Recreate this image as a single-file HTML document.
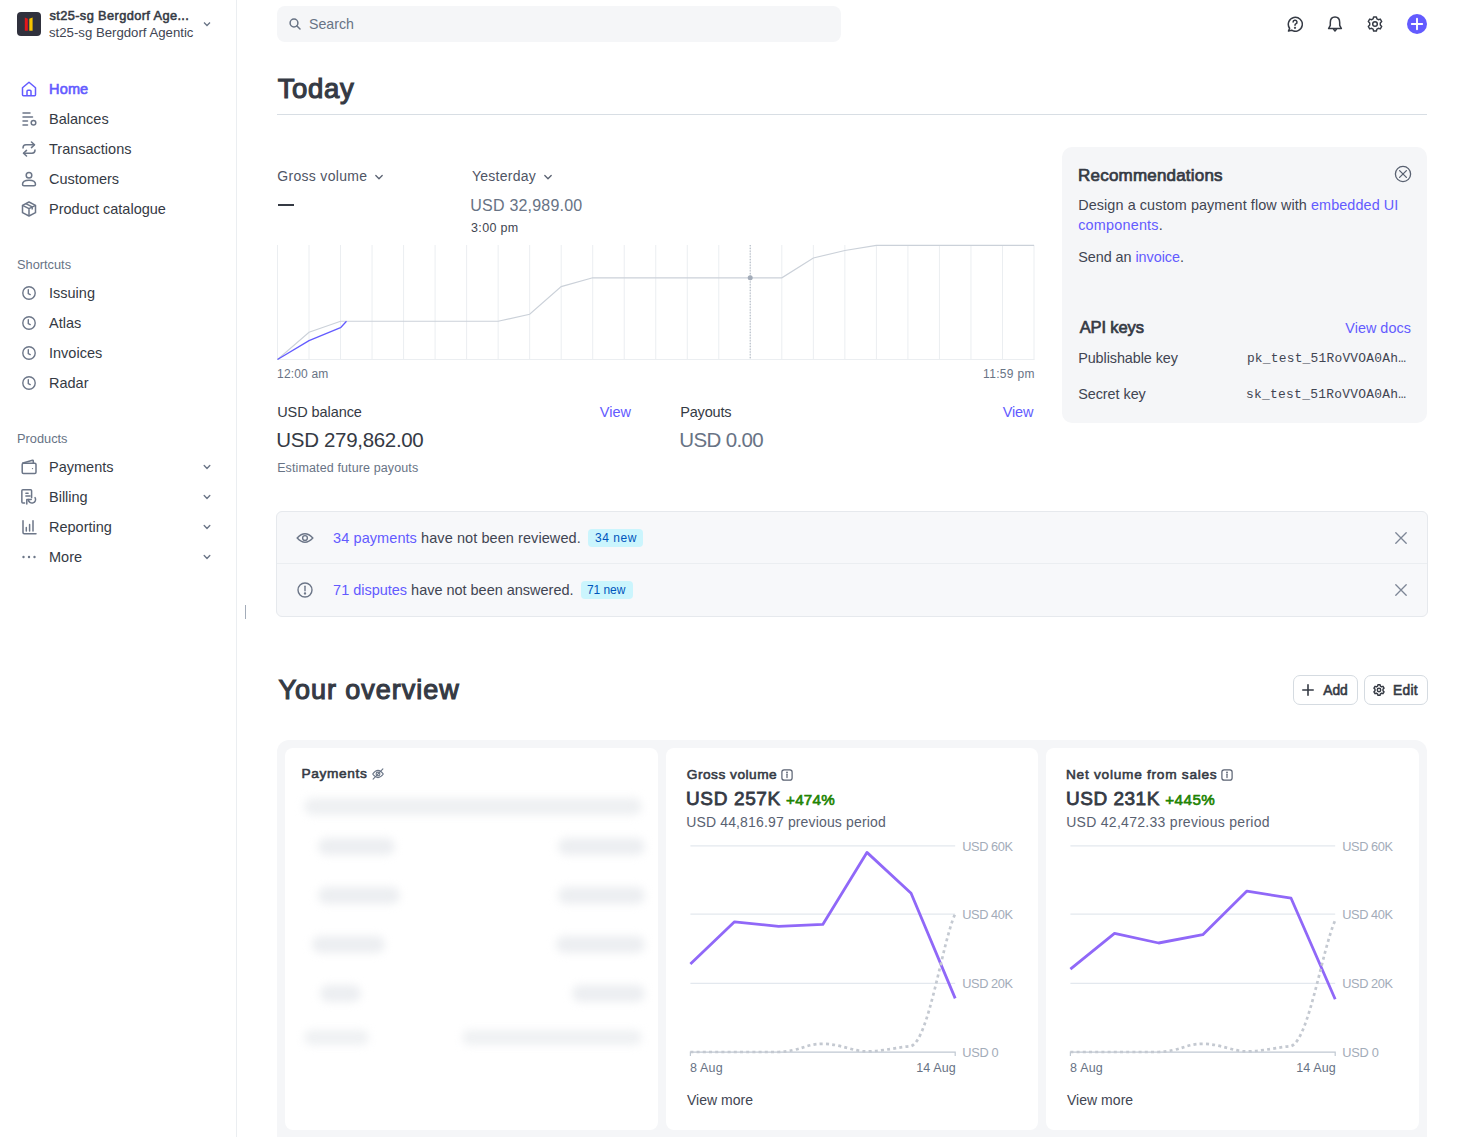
<!DOCTYPE html>
<html><head><meta charset="utf-8">
<style>
*{box-sizing:border-box;margin:0;padding:0}
html,body{width:1462px;height:1137px;overflow:hidden;background:#fff;font-family:"Liberation Sans",sans-serif;color:#353a44}
.abs{position:absolute}
.t{position:absolute;white-space:nowrap;line-height:1}
#side{position:absolute;left:0;top:0;width:237px;height:1137px;border-right:1px solid #ebeef1}
.nav{font-size:14.5px;color:#353a44}
.ico{position:absolute}
.sec{font-size:12.8px;color:#687385}
.purple{color:#635bff}
</style></head><body>
<div id="side">
  <!-- logo -->
  <div class="abs" style="left:17px;top:12px;width:24px;height:24px;border-radius:4px;background:#30313d">
    <svg class="abs" style="left:0;top:0" width="24" height="24" viewBox="0 0 24 24"><path d="M7.8 5.6 L10.8 6.8 V18.8 H7.8 Z" fill="#e5171b"/><path d="M12.3 6.8 L15.6 5.6 V18.8 H12.3 Z" fill="#f6c400"/></svg>
  </div>
  <div class="t" style="left:49px;top:26px;font-size:13.2px;color:#414552">st25-sg Bergdorf Agentic</div>
  <svg class="ico" style="left:202px;top:19px" width="10" height="10" viewBox="0 0 10 10"><path d="M2 3.5 L5 6.5 L8 3.5" fill="none" stroke="#687385" stroke-width="1.3"/></svg>


  <svg class="ico" style="left:21px;top:81px" width="16" height="16" viewBox="0 0 16 16" fill="none" stroke="#635bff" stroke-width="1.5" stroke-linejoin="round"><path d="M1.5 6.8 L8 1.2 L14.5 6.8 V13.8 Q14.5 14.8 13.5 14.8 H2.5 Q1.5 14.8 1.5 13.8 Z"/><path d="M6 14.8 V10.2 Q6 9.2 7 9.2 H9 Q10 9.2 10 10.2 V14.8"/></svg>
  <svg class="ico" style="left:21px;top:111px" width="16" height="16" viewBox="0 0 16 16" fill="none" stroke="#6c7688" stroke-width="1.5" stroke-linecap="round"><path d="M2 2 H9 M2 6 H11.5 M2 10 H6.5 M2 14 H6.5"/><circle cx="12.5" cy="11.8" r="2.3"/></svg>
  <svg class="ico" style="left:21px;top:141px" width="16" height="16" viewBox="0 0 16 16" fill="none" stroke="#6c7688" stroke-width="1.5" stroke-linecap="round" stroke-linejoin="round"><path d="M10.5 1 L13.5 3.8 L10.5 6.6"/><path d="M13.3 3.8 H5 Q2 3.8 2 7"/><path d="M5.5 15 L2.5 12.2 L5.5 9.4"/><path d="M2.7 12.2 H11 Q14 12.2 14 9"/></svg>
  <svg class="ico" style="left:21px;top:171px" width="16" height="16" viewBox="0 0 16 16" fill="none" stroke="#6c7688" stroke-width="1.5"><circle cx="8" cy="4.3" r="2.8"/><path d="M1.5 13.3 Q1.5 9.2 8 9.2 Q14.5 9.2 14.5 13.3 Q14.5 14.8 13 14.8 H3 Q1.5 14.8 1.5 13.3 Z"/></svg>
  <svg class="ico" style="left:21px;top:201px" width="16" height="16" viewBox="0 0 16 16" fill="none" stroke="#6c7688" stroke-width="1.5" stroke-linejoin="round"><path d="M8 1 L14.5 4.3 V11.7 L8 15 L1.5 11.7 V4.3 Z"/><path d="M1.5 4.3 L8 7.6 L14.5 4.3 M8 7.6 V15"/><path d="M4.8 2.7 L11.2 5.9 V8.5"/></svg>
<svg class="ico" style="left:22px;top:286px" width="14" height="14" viewBox="0 0 14 14" fill="none" stroke="#6c7688" stroke-width="1.4" stroke-linecap="round"><circle cx="7" cy="7" r="6.2"/><path d="M6.3 3.8 V7.5 L8.2 8.6"/></svg>
<svg class="ico" style="left:22px;top:316px" width="14" height="14" viewBox="0 0 14 14" fill="none" stroke="#6c7688" stroke-width="1.4" stroke-linecap="round"><circle cx="7" cy="7" r="6.2"/><path d="M6.3 3.8 V7.5 L8.2 8.6"/></svg>
<svg class="ico" style="left:22px;top:346px" width="14" height="14" viewBox="0 0 14 14" fill="none" stroke="#6c7688" stroke-width="1.4" stroke-linecap="round"><circle cx="7" cy="7" r="6.2"/><path d="M6.3 3.8 V7.5 L8.2 8.6"/></svg>
<svg class="ico" style="left:22px;top:376px" width="14" height="14" viewBox="0 0 14 14" fill="none" stroke="#6c7688" stroke-width="1.4" stroke-linecap="round"><circle cx="7" cy="7" r="6.2"/><path d="M6.3 3.8 V7.5 L8.2 8.6"/></svg>

  <svg class="ico" style="left:21px;top:459px" width="16" height="16" viewBox="0 0 16 16" fill="none" stroke="#6c7688" stroke-width="1.5" stroke-linejoin="round"><path d="M1.2 4.2 L11.5 1.3 Q12.3 1.1 12.3 2 V4.2"/><rect x="1.2" y="4.2" width="13.8" height="10.3" rx="1.2"/><circle cx="11.5" cy="9.6" r="0.7" fill="#6c7688" stroke="none"/></svg>
  <svg class="ico" style="left:21px;top:489px" width="16" height="16" viewBox="0 0 16 16" fill="none" stroke="#6c7688" stroke-width="1.5" stroke-linecap="round" stroke-linejoin="round"><path d="M3.6 13.9 H1.9 Q0.85 13.9 0.85 12.9 V1.85 Q0.85 0.8 1.9 0.8 H9.6 Q10.6 0.8 10.6 1.85 V8.7"/><path d="M4.9 4.3 H7.1 M4.9 7.1 H9.1"/><path d="M14.05 8.55 A3.6 3.6 0 1 1 7.4 10.6"/><path d="M5.8 15 V10.6 H10.2"/></svg>
  <svg class="ico" style="left:22px;top:520px" width="15" height="15" viewBox="0 0 15 15" fill="none" stroke="#6c7688" stroke-width="1.5" stroke-linecap="round"><path d="M1 0.8 V12.6 Q1 13.8 2.2 13.8 H14"/><path d="M4.3 7.5 V11 M7.6 4.5 V11 M11 0.8 V11"/></svg>
  <svg class="ico" style="left:21px;top:550px" width="16" height="14" viewBox="0 0 16 14" fill="#6c7688"><circle cx="2.5" cy="7" r="1.2"/><circle cx="8" cy="7" r="1.2"/><circle cx="13.5" cy="7" r="1.2"/></svg>
<svg class="ico" style="left:202px;top:462px" width="10" height="10" viewBox="0 0 10 10"><path d="M2.2 3.6 L5 6.4 L7.8 3.6" fill="none" stroke="#6c7688" stroke-width="1.4" stroke-linecap="round" stroke-linejoin="round"/></svg>
<svg class="ico" style="left:202px;top:492px" width="10" height="10" viewBox="0 0 10 10"><path d="M2.2 3.6 L5 6.4 L7.8 3.6" fill="none" stroke="#6c7688" stroke-width="1.4" stroke-linecap="round" stroke-linejoin="round"/></svg>
<svg class="ico" style="left:202px;top:522px" width="10" height="10" viewBox="0 0 10 10"><path d="M2.2 3.6 L5 6.4 L7.8 3.6" fill="none" stroke="#6c7688" stroke-width="1.4" stroke-linecap="round" stroke-linejoin="round"/></svg>
<svg class="ico" style="left:202px;top:552px" width="10" height="10" viewBox="0 0 10 10"><path d="M2.2 3.6 L5 6.4 L7.8 3.6" fill="none" stroke="#6c7688" stroke-width="1.4" stroke-linecap="round" stroke-linejoin="round"/></svg>
  <div class="t nav" style="left:49px;top:112px">Balances</div>
  <div class="t nav" style="left:49px;top:142px">Transactions</div>
  <div class="t nav" style="left:49px;top:172px">Customers</div>
  <div class="t nav" style="left:49px;top:202px">Product catalogue</div>

  <div class="t sec" style="left:17px;top:259px">Shortcuts</div>
  <div class="t nav" style="left:49px;top:286px">Issuing</div>
  <div class="t nav" style="left:49px;top:316px">Atlas</div>
  <div class="t nav" style="left:49px;top:346px">Invoices</div>
  <div class="t nav" style="left:49px;top:376px">Radar</div>

  <div class="t sec" style="left:17px;top:433px">Products</div>
  <div class="t nav" style="left:49px;top:460px">Payments</div>
  <div class="t nav" style="left:49px;top:490px">Billing</div>
  <div class="t nav" style="left:49px;top:520px">Reporting</div>
  <div class="t nav" style="left:49px;top:550px">More</div>
</div>
<div class="abs" style="left:244.5px;top:605px;width:1.5px;height:14px;background:#a3acb9"></div>

<!-- main -->
<div class="abs" style="left:277px;top:6px;width:564px;height:36px;border-radius:8px;background:#f5f6f8"></div>
<svg class="ico" style="left:289px;top:18px" width="12" height="12" viewBox="0 0 12 12" fill="none" stroke="#687385" stroke-width="1.5" stroke-linecap="round"><circle cx="5" cy="5" r="3.9"/><path d="M8 8 L11 11"/></svg>
<div class="t" style="left:309px;top:17px;font-size:14.2px;color:#687385">Search</div>
<svg class="ico" style="left:1287px;top:16px" width="16" height="16" viewBox="0 0 16 16" fill="none" stroke="#353a44" stroke-width="1.5" stroke-linecap="round" stroke-linejoin="round"><path d="M1.5 15 L2.6 12.3 A7 7 0 1 1 4.6 14.2 Z"/><path d="M6.1 6.1 A1.95 1.95 0 1 1 8.8 7.9 Q8 8.4 8 9.3"/><circle cx="8" cy="11.8" r="0.4" fill="#353a44"/></svg>
<svg class="ico" style="left:1327px;top:16px" width="16" height="16" viewBox="0 0 16 16" fill="none" stroke="#353a44" stroke-width="1.5" stroke-linejoin="round"><path d="M8 1 Q3.3 1 3.3 6.5 V9.3 L1.6 12.6 H14.4 L12.7 9.3 V6.5 Q12.7 1 8 1 Z"/><path d="M6.3 12.8 L8 15 L9.7 12.8"/></svg>
<svg class="ico" style="left:1367px;top:16px" width="16" height="16" viewBox="0 0 16 16" fill="none" stroke="#353a44" stroke-width="1.45" stroke-linejoin="round"><path d="M6.6 1 H9.4 L9.9 2.9 L11.4 3.7 L13.3 3.1 L14.7 5.5 L13.3 6.9 V9.1 L14.7 10.5 L13.3 12.9 L11.4 12.3 L9.9 13.1 L9.4 15 H6.6 L6.1 13.1 L4.6 12.3 L2.7 12.9 L1.3 10.5 L2.7 9.1 V6.9 L1.3 5.5 L2.7 3.1 L4.6 3.7 L6.1 2.9 Z"/><circle cx="8" cy="8" r="2.3"/></svg>
<svg class="ico" style="left:1407px;top:14px" width="20" height="20" viewBox="0 0 20 20"><circle cx="10" cy="10" r="10" fill="#635bff"/><path d="M10 4.8 V15.2 M4.8 10 H15.2" stroke="#fff" stroke-width="1.9" stroke-linecap="round"/></svg>

<div class="t" id="acct1" style="left:49.50px;top:9.96px;font-size:12.8px;font-weight:normal;color:#353a44;-webkit-text-stroke:0.54px #353a44;letter-spacing:0.385px;font-family:'Liberation Sans',sans-serif">st25-sg Bergdorf Age...</div>
<div class="t" id="home" style="left:49.12px;top:82.03px;font-size:14.5px;font-weight:normal;color:#635bff;-webkit-text-stroke:0.61px #635bff;letter-spacing:0.120px;font-family:'Liberation Sans',sans-serif">Home</div>
<div class="t" id="today" style="left:277.70px;top:74.72px;font-size:27.5px;font-weight:normal;color:#353a44;-webkit-text-stroke:1.16px #353a44;letter-spacing:0.675px;font-family:'Liberation Sans',sans-serif">Today</div>
<div class="abs" style="left:277px;top:114px;width:1150px;height:1px;background:#d8dee4"></div>
<div class="t" id="grossv" style="left:277.18px;top:168.65px;font-size:14px;font-weight:normal;color:#4f5565;letter-spacing:0.328px;font-family:'Liberation Sans',sans-serif">Gross volume</div>
<svg class="ico" style="left:374px;top:172px" width="10" height="10" viewBox="0 0 10 10"><path d="M1.8 3.5 L5 6.7 L8.2 3.5" fill="none" stroke="#596171" stroke-width="1.3" stroke-linecap="round" stroke-linejoin="round"/></svg>
<div class="t" id="yest" style="left:472.00px;top:168.65px;font-size:14px;font-weight:normal;color:#4f5565;letter-spacing:0.243px;font-family:'Liberation Sans',sans-serif">Yesterday</div>
<svg class="ico" style="left:543px;top:172px" width="10" height="10" viewBox="0 0 10 10"><path d="M1.8 3.5 L5 6.7 L8.2 3.5" fill="none" stroke="#596171" stroke-width="1.3" stroke-linecap="round" stroke-linejoin="round"/></svg>
<div class="abs" style="left:278px;top:204px;width:16px;height:2px;background:#353a44"></div>
<div class="t" id="yamt" style="left:470.32px;top:198.46px;font-size:16px;font-weight:normal;color:#687385;letter-spacing:0.210px;font-family:'Liberation Sans',sans-serif">USD 32,989.00</div>
<div class="t" id="ytime" style="left:471.12px;top:222.12px;font-size:12.5px;font-weight:normal;color:#414552;letter-spacing:0.300px;font-family:'Liberation Sans',sans-serif">3:00 pm</div>
<svg class="ico" style="left:0;top:0" width="1462" height="400" viewBox="0 0 1462 400"><line x1="277.50" y1="245" x2="277.50" y2="359.5" stroke="#ebeef1" stroke-width="1"/><line x1="309.02" y1="245" x2="309.02" y2="359.5" stroke="#ebeef1" stroke-width="1"/><line x1="340.54" y1="245" x2="340.54" y2="359.5" stroke="#ebeef1" stroke-width="1"/><line x1="372.06" y1="245" x2="372.06" y2="359.5" stroke="#ebeef1" stroke-width="1"/><line x1="403.58" y1="245" x2="403.58" y2="359.5" stroke="#ebeef1" stroke-width="1"/><line x1="435.10" y1="245" x2="435.10" y2="359.5" stroke="#ebeef1" stroke-width="1"/><line x1="466.62" y1="245" x2="466.62" y2="359.5" stroke="#ebeef1" stroke-width="1"/><line x1="498.15" y1="245" x2="498.15" y2="359.5" stroke="#ebeef1" stroke-width="1"/><line x1="529.67" y1="245" x2="529.67" y2="359.5" stroke="#ebeef1" stroke-width="1"/><line x1="561.19" y1="245" x2="561.19" y2="359.5" stroke="#ebeef1" stroke-width="1"/><line x1="592.71" y1="245" x2="592.71" y2="359.5" stroke="#ebeef1" stroke-width="1"/><line x1="624.23" y1="245" x2="624.23" y2="359.5" stroke="#ebeef1" stroke-width="1"/><line x1="655.75" y1="245" x2="655.75" y2="359.5" stroke="#ebeef1" stroke-width="1"/><line x1="687.27" y1="245" x2="687.27" y2="359.5" stroke="#ebeef1" stroke-width="1"/><line x1="718.79" y1="245" x2="718.79" y2="359.5" stroke="#ebeef1" stroke-width="1"/><line x1="750.31" y1="245" x2="750.31" y2="359.5" stroke="#ebeef1" stroke-width="1"/><line x1="781.83" y1="245" x2="781.83" y2="359.5" stroke="#ebeef1" stroke-width="1"/><line x1="813.35" y1="245" x2="813.35" y2="359.5" stroke="#ebeef1" stroke-width="1"/><line x1="844.88" y1="245" x2="844.88" y2="359.5" stroke="#ebeef1" stroke-width="1"/><line x1="876.40" y1="245" x2="876.40" y2="359.5" stroke="#ebeef1" stroke-width="1"/><line x1="907.92" y1="245" x2="907.92" y2="359.5" stroke="#ebeef1" stroke-width="1"/><line x1="939.44" y1="245" x2="939.44" y2="359.5" stroke="#ebeef1" stroke-width="1"/><line x1="970.96" y1="245" x2="970.96" y2="359.5" stroke="#ebeef1" stroke-width="1"/><line x1="1002.48" y1="245" x2="1002.48" y2="359.5" stroke="#ebeef1" stroke-width="1"/><line x1="1034.00" y1="245" x2="1034.00" y2="359.5" stroke="#ebeef1" stroke-width="1"/><line x1="277" y1="359.5" x2="1034.5" y2="359.5" stroke="#ebeef1" stroke-width="1"/><path d="M277.50 359.5 L309.02 332.3 L340.54 321.2 L498.15 321.2 L529.67 314.3 L561.19 286.6 L592.71 277.8 L781.83 277.8 L813.35 258 L844.88 250.5 L876.40 245.4 L1034.00 245.4" fill="none" stroke="#cbd1d9" stroke-width="1.15"/><line x1="750.2" y1="245" x2="750.2" y2="359.5" stroke="#a3acb9" stroke-width="0.9" stroke-dasharray="1.2 1.6"/><circle cx="750.2" cy="277.8" r="2.5" fill="#a3acb9"/><path d="M277.5 359.5 L309.02 340.6 L340.54 327.7 L346.5 321.3" fill="none" stroke="#635bff" stroke-width="1.3" stroke-linejoin="round"/></svg>
<div class="t" id="t12" style="left:277.06px;top:367.74px;font-size:12px;font-weight:normal;color:#687385;letter-spacing:0.175px;font-family:'Liberation Sans',sans-serif">12:00 am</div>
<div class="t" id="t1159" style="right:427.20px;top:367.74px;font-size:12px;font-weight:normal;color:#687385;letter-spacing:0.322px;font-family:'Liberation Sans',sans-serif">11:59 pm</div>
<div class="t" id="usdbal" style="left:277.16px;top:405.13px;font-size:14.5px;font-weight:normal;color:#353a44;letter-spacing:-0.072px;font-family:'Liberation Sans',sans-serif">USD balance</div>
<div class="t" id="view1" style="right:830.94px;top:405.13px;font-size:14.5px;font-weight:normal;color:#635bff;letter-spacing:0.030px;font-family:'Liberation Sans',sans-serif">View</div>
<div class="t" id="balamt" style="left:276.36px;top:430.15px;font-size:20.5px;font-weight:normal;color:#353a44;letter-spacing:-0.323px;font-family:'Liberation Sans',sans-serif">USD 279,862.00</div>
<div class="t" id="estfut" style="left:277.16px;top:461.52px;font-size:12.5px;font-weight:normal;color:#687385;letter-spacing:0.120px;font-family:'Liberation Sans',sans-serif">Estimated future payouts</div>
<div class="t" id="payouts" style="left:680.14px;top:405.03px;font-size:14.5px;font-weight:normal;color:#353a44;letter-spacing:-0.150px;font-family:'Liberation Sans',sans-serif">Payouts</div>
<div class="t" id="view2" style="right:428.80px;top:405.03px;font-size:14.5px;font-weight:normal;color:#635bff;letter-spacing:-0.180px;font-family:'Liberation Sans',sans-serif">View</div>
<div class="t" id="payamt" style="left:679.34px;top:429.95px;font-size:20.5px;font-weight:normal;color:#687385;letter-spacing:-0.637px;font-family:'Liberation Sans',sans-serif">USD 0.00</div>
<div class="abs" style="left:1062px;top:147px;width:365px;height:276px;border-radius:10px;background:#f5f6f8"></div>
<div class="t" id="recs" style="left:1078.10px;top:167.11px;font-size:17px;font-weight:normal;color:#353a44;-webkit-text-stroke:0.71px #353a44;letter-spacing:0.193px;font-family:'Liberation Sans',sans-serif">Recommendations</div>
<svg class="ico" style="left:1394px;top:165px" width="18" height="18" viewBox="0 0 18 18" fill="none" stroke="#596171" stroke-width="1.3" stroke-linecap="round"><circle cx="9" cy="9" r="7.6"/><path d="M5.6 5.6 L12.4 12.4 M12.4 5.6 L5.6 12.4"/></svg>
<div class="t" id="rec1" style="left:1078.18px;top:198.11px;font-size:14.4px;font-weight:normal;color:#414552;letter-spacing:0.096px;font-family:'Liberation Sans',sans-serif">Design a custom payment flow with <span style="color:#635bff">embedded UI</span></div>
<div class="t" id="rec2" style="left:1078.18px;top:217.71px;font-size:14.4px;font-weight:normal;color:#414552;letter-spacing:0.216px;font-family:'Liberation Sans',sans-serif"><span style="color:#635bff">components</span>.</div>
<div class="t" id="rec3" style="left:1078.18px;top:249.51px;font-size:14.4px;font-weight:normal;color:#414552;letter-spacing:-0.042px;font-family:'Liberation Sans',sans-serif">Send an <span style="color:#635bff">invoice</span>.</div>
<div class="t" id="apik" style="left:1079.70px;top:319.23px;font-size:16.5px;font-weight:normal;color:#353a44;-webkit-text-stroke:0.69px #353a44;letter-spacing:-0.126px;font-family:'Liberation Sans',sans-serif">API keys</div>
<div class="t" id="viewdocs" style="right:51.12px;top:321.01px;font-size:14.4px;font-weight:normal;color:#635bff;letter-spacing:0.030px;font-family:'Liberation Sans',sans-serif">View docs</div>
<div class="t" id="pubk" style="left:1078.18px;top:350.91px;font-size:14.4px;font-weight:normal;color:#414552;letter-spacing:-0.078px;font-family:'Liberation Sans',sans-serif">Publishable key</div>
<div class="t" id="pkv" style="left:1246.88px;top:353.11px;font-size:12.9px;font-weight:normal;color:#414552;letter-spacing:0.225px;font-family:'Liberation Mono',monospace">pk_test_51RoVVOA0Ah&#8230;</div>
<div class="t" id="seck" style="left:1078.18px;top:386.91px;font-size:14.4px;font-weight:normal;color:#414552;letter-spacing:-0.040px;font-family:'Liberation Sans',sans-serif">Secret key</div>
<div class="t" id="skv" style="left:1246.08px;top:388.91px;font-size:12.9px;font-weight:normal;color:#414552;letter-spacing:0.272px;font-family:'Liberation Mono',monospace">sk_test_51RoVVOA0Ah&#8230;</div>
<div class="abs" style="left:276px;top:511px;width:1152px;height:106px;border-radius:6px;background:#f7f8fa;border:1px solid #e6e9ed"></div>
<div class="abs" style="left:277px;top:563px;width:1150px;height:1px;background:#ebeef1"></div>
<svg class="ico" style="left:296px;top:530px" width="18" height="16" viewBox="0 0 18 16" fill="none" stroke="#6c7688" stroke-width="1.4"><path d="M1.2 8 Q9 -0.5 16.8 8 Q9 16.5 1.2 8 Z"/><circle cx="9" cy="8" r="2.4"/></svg>
<svg class="ico" style="left:297px;top:582px" width="16" height="16" viewBox="0 0 16 16" fill="none" stroke="#6c7688" stroke-width="1.4" stroke-linecap="round"><circle cx="8" cy="8" r="7"/><path d="M8 4.3 V8.8"/><circle cx="8" cy="11.4" r="0.5" fill="#6c7688"/></svg>
<div class="t" id="al1" style="left:333.12px;top:531.03px;font-size:14.5px;font-weight:normal;color:#414552;letter-spacing:0.074px;font-family:'Liberation Sans',sans-serif"><span style="color:#635bff">34 payments</span> have not been reviewed.</div>
<div class="abs" style="left:588px;top:529px;width:55px;height:18px;border-radius:4px;background:#cbf5fd"></div>
<div class="t" id="b1" style="left:595.00px;top:532.14px;font-size:12px;font-weight:normal;color:#0055bc;letter-spacing:0.522px;font-family:'Liberation Sans',sans-serif">34 new</div>
<div class="t" id="al2" style="left:333.12px;top:582.93px;font-size:14.5px;font-weight:normal;color:#414552;letter-spacing:-0.019px;font-family:'Liberation Sans',sans-serif"><span style="color:#635bff">71 disputes</span> have not been answered.</div>
<div class="abs" style="left:581px;top:581px;width:52px;height:18px;border-radius:4px;background:#cbf5fd"></div>
<div class="t" id="b2" style="left:587.00px;top:584.14px;font-size:12px;font-weight:normal;color:#0055bc;letter-spacing:-0.072px;font-family:'Liberation Sans',sans-serif">71 new</div>
<svg class="ico" style="left:1395px;top:532px" width="12" height="12" viewBox="0 0 12 12" fill="none" stroke="#7d8696" stroke-width="1.3" stroke-linecap="round"><path d="M0.8 0.8 L11.2 11.2 M11.2 0.8 L0.8 11.2"/></svg>
<svg class="ico" style="left:1395px;top:584px" width="12" height="12" viewBox="0 0 12 12" fill="none" stroke="#7d8696" stroke-width="1.3" stroke-linecap="round"><path d="M0.8 0.8 L11.2 11.2 M11.2 0.8 L0.8 11.2"/></svg>
<div class="t" id="overview" style="left:278.40px;top:676.94px;font-size:27px;font-weight:normal;color:#353a44;-webkit-text-stroke:1.13px #353a44;letter-spacing:0.975px;font-family:'Liberation Sans',sans-serif">Your overview</div>
<div class="abs" style="left:1293px;top:675px;width:65px;height:30px;border-radius:7px;border:1px solid #d5dbe1;background:#fff"></div>
<svg class="ico" style="left:1302px;top:684px" width="12" height="12" viewBox="0 0 12 12" fill="none" stroke="#353a44" stroke-width="1.6" stroke-linecap="round"><path d="M6 0.8 V11.2 M0.8 6 H11.2"/></svg>
<div class="t" id="add" style="left:1323.20px;top:684.32px;font-size:13.8px;font-weight:normal;color:#353a44;-webkit-text-stroke:0.58px #353a44;letter-spacing:-0.000px;font-family:'Liberation Sans',sans-serif">Add</div>
<div class="abs" style="left:1364px;top:675px;width:64px;height:30px;border-radius:7px;border:1px solid #d5dbe1;background:#fff"></div>
<svg class="ico" style="left:1373px;top:684px" width="12" height="12" viewBox="0 0 16 16" fill="none" stroke="#353a44" stroke-width="1.9" stroke-linejoin="round"><path d="M6.6 1 H9.4 L9.9 2.9 L11.4 3.7 L13.3 3.1 L14.7 5.5 L13.3 6.9 V9.1 L14.7 10.5 L13.3 12.9 L11.4 12.3 L9.9 13.1 L9.4 15 H6.6 L6.1 13.1 L4.6 12.3 L2.7 12.9 L1.3 10.5 L2.7 9.1 V6.9 L1.3 5.5 L2.7 3.1 L4.6 3.7 L6.1 2.9 Z"/><circle cx="8" cy="8" r="2.3"/></svg>
<div class="t" id="edit" style="left:1393.00px;top:684.32px;font-size:13.8px;font-weight:normal;color:#353a44;-webkit-text-stroke:0.58px #353a44;letter-spacing:0.300px;font-family:'Liberation Sans',sans-serif">Edit</div>
<div class="abs" style="left:277px;top:740px;width:1150px;height:420px;border-radius:12px;background:#f5f6f8"></div>
<div class="abs" style="left:285px;top:748px;width:373px;height:382px;border-radius:8px;background:#fff"></div>
<div class="abs" style="left:666px;top:748px;width:372px;height:382px;border-radius:8px;background:#fff"></div>
<div class="abs" style="left:1046px;top:748px;width:373px;height:382px;border-radius:8px;background:#fff"></div>
<div class="t" id="paytitle" style="left:301.50px;top:767.30px;font-size:13.7px;font-weight:normal;color:#353a44;-webkit-text-stroke:0.58px #353a44;letter-spacing:0.642px;font-family:'Liberation Sans',sans-serif">Payments</div>
<svg class="ico" style="left:372px;top:768px" width="12" height="12" viewBox="0 0 12 12" fill="none" stroke="#687385" stroke-width="1.1" stroke-linecap="round"><path d="M0.7 6 Q6 -1.2 11.3 6 Q6 13.2 0.7 6 Z"/><circle cx="6" cy="6" r="1.9"/><path d="M10.9 0.9 L1.1 11.1"/></svg>
<div class="abs" style="left:0;top:0;width:1462px;height:1137px;filter:blur(4.5px)"><div class="abs" style="left:304px;top:797.5px;width:338px;height:17px;border-radius:9px;background:#eef0f2"></div><div class="abs" style="left:318px;top:837.5px;width:77px;height:17px;border-radius:9px;background:#eceef1"></div><div class="abs" style="left:558px;top:837.5px;width:87px;height:17px;border-radius:9px;background:#eceef1"></div><div class="abs" style="left:318px;top:886.5px;width:82px;height:17px;border-radius:9px;background:#eceef1"></div><div class="abs" style="left:558px;top:886.5px;width:87px;height:17px;border-radius:9px;background:#eceef1"></div><div class="abs" style="left:312px;top:935.5px;width:73px;height:17px;border-radius:9px;background:#eceef1"></div><div class="abs" style="left:556px;top:935.5px;width:89px;height:17px;border-radius:9px;background:#eceef1"></div><div class="abs" style="left:320px;top:984.5px;width:41px;height:17px;border-radius:9px;background:#eceef1"></div><div class="abs" style="left:572px;top:984.5px;width:73px;height:17px;border-radius:9px;background:#eceef1"></div><div class="abs" style="left:304px;top:1029.5px;width:65px;height:15px;border-radius:8px;background:#eff1f3"></div><div class="abs" style="left:462px;top:1029.5px;width:180px;height:15px;border-radius:8px;background:#eff1f3"></div></div>
<div class="t" id="ct_686.8" style="left:686.80px;top:767.50px;font-size:13.7px;font-weight:normal;color:#353a44;-webkit-text-stroke:0.58px #353a44;letter-spacing:0.492px;font-family:'Liberation Sans',sans-serif">Gross volume</div>
<svg class="ico" style="left:781.1px;top:768.5px" width="12" height="12" viewBox="0 0 12 12" fill="none" stroke="#596171" stroke-width="1.2"><rect x="0.9" y="0.9" width="10.2" height="10.2" rx="2.2"/><path d="M6 5.3 V8.6" stroke-linecap="round"/><circle cx="6" cy="3.5" r="0.35" fill="#596171"/></svg>
<div class="t" id="ca_686.8" style="left:686.00px;top:788.62px;font-size:19px;font-weight:normal;color:#353a44;-webkit-text-stroke:0.80px #353a44;letter-spacing:0.641px;font-family:'Liberation Sans',sans-serif">USD 257K</div>
<div class="t" id="cp_686.8" style="left:786.10px;top:791.83px;font-size:15.2px;font-weight:normal;color:#228403;-webkit-text-stroke:0.64px #228403;letter-spacing:0.220px;font-family:'Liberation Sans',sans-serif">+474%</div>
<div class="t" id="cv_686.8" style="left:686.16px;top:814.65px;font-size:14px;font-weight:normal;color:#596171;letter-spacing:0.150px;font-family:'Liberation Sans',sans-serif">USD 44,816.97 previous period</div>
<svg class="ico" style="left:0;top:0" width="1462" height="1137" viewBox="0 0 1462 1137"><line x1="690.4" y1="845.8" x2="955.2" y2="845.8" stroke="#e3e8ee" stroke-width="1.2"/><line x1="690.4" y1="914.2" x2="955.2" y2="914.2" stroke="#e3e8ee" stroke-width="1.2"/><line x1="690.4" y1="983.3" x2="955.2" y2="983.3" stroke="#e3e8ee" stroke-width="1.2"/><path d="M690.4 1056 V1052.2 H955.2 V1056" fill="none" stroke="#c0c8d2" stroke-width="1.2"/><path d="M690.40 963.9 L734.53 921.8 L778.67 926.4 L822.80 924.4 L866.93 852.4 L911.07 893.3 L955.20 998.4" fill="none" stroke="#9068f8" stroke-width="2.8" stroke-linejoin="round"/><path d="M690.4 1052 L778.67 1052 C800.73 1051 805.15 1044 822.80 1043.8 C840.45 1044 853.69 1051.5 866.93 1051.5 C884.59 1051 897.83 1047 911.07 1046.2 C928.72 1040 941.96 943.7 955.20 913.7" fill="none" stroke="#c4c9d1" stroke-width="2.7" stroke-dasharray="3 3.2"/></svg>
<div class="t" id="l60_686.8" style="left:962.24px;top:841.06px;font-size:12.8px;font-weight:normal;color:#a3acb9;letter-spacing:-0.435px;font-family:'Liberation Sans',sans-serif">USD 60K</div>
<div class="t" id="l40_686.8" style="left:962.24px;top:909.16px;font-size:12.8px;font-weight:normal;color:#a3acb9;letter-spacing:-0.435px;font-family:'Liberation Sans',sans-serif">USD 40K</div>
<div class="t" id="l20_686.8" style="left:962.24px;top:978.06px;font-size:12.8px;font-weight:normal;color:#a3acb9;letter-spacing:-0.435px;font-family:'Liberation Sans',sans-serif">USD 20K</div>
<div class="t" id="l0_686.8" style="left:962.24px;top:1046.86px;font-size:12.8px;font-weight:normal;color:#a3acb9;letter-spacing:-0.304px;font-family:'Liberation Sans',sans-serif">USD 0</div>
<div class="t" id="d8_686.8" style="left:690.08px;top:1061.72px;font-size:12.5px;font-weight:normal;color:#687385;letter-spacing:0.146px;font-family:'Liberation Sans',sans-serif">8 Aug</div>
<div class="t" id="d14_686.8" style="right:506.16px;top:1061.72px;font-size:12.5px;font-weight:normal;color:#687385;letter-spacing:0.108px;font-family:'Liberation Sans',sans-serif">14 Aug</div>
<div class="t" id="vm_686.8" style="left:686.88px;top:1092.95px;font-size:14px;font-weight:normal;color:#414552;letter-spacing:0.040px;font-family:'Liberation Sans',sans-serif">View more</div>
<div class="t" id="ct_1066.8" style="left:1066.00px;top:767.50px;font-size:13.7px;font-weight:normal;color:#353a44;-webkit-text-stroke:0.58px #353a44;letter-spacing:0.725px;font-family:'Liberation Sans',sans-serif">Net volume from sales</div>
<svg class="ico" style="left:1221.0px;top:768.5px" width="12" height="12" viewBox="0 0 12 12" fill="none" stroke="#596171" stroke-width="1.2"><rect x="0.9" y="0.9" width="10.2" height="10.2" rx="2.2"/><path d="M6 5.3 V8.6" stroke-linecap="round"/><circle cx="6" cy="3.5" r="0.35" fill="#596171"/></svg>
<div class="t" id="ca_1066.8" style="left:1066.00px;top:788.62px;font-size:19px;font-weight:normal;color:#353a44;-webkit-text-stroke:0.80px #353a44;letter-spacing:0.514px;font-family:'Liberation Sans',sans-serif">USD 231K</div>
<div class="t" id="cp_1066.8" style="left:1165.30px;top:791.83px;font-size:15.2px;font-weight:normal;color:#228403;-webkit-text-stroke:0.64px #228403;letter-spacing:0.455px;font-family:'Liberation Sans',sans-serif">+445%</div>
<div class="t" id="cv_1066.8" style="left:1066.16px;top:814.65px;font-size:14px;font-weight:normal;color:#596171;letter-spacing:0.289px;font-family:'Liberation Sans',sans-serif">USD 42,472.33 previous period</div>
<svg class="ico" style="left:0;top:0" width="1462" height="1137" viewBox="0 0 1462 1137"><line x1="1070.3999999999999" y1="845.8" x2="1335.1999999999998" y2="845.8" stroke="#e3e8ee" stroke-width="1.2"/><line x1="1070.3999999999999" y1="914.2" x2="1335.1999999999998" y2="914.2" stroke="#e3e8ee" stroke-width="1.2"/><line x1="1070.3999999999999" y1="983.3" x2="1335.1999999999998" y2="983.3" stroke="#e3e8ee" stroke-width="1.2"/><path d="M1070.3999999999999 1056 V1052.2 H1335.1999999999998 V1056" fill="none" stroke="#c0c8d2" stroke-width="1.2"/><path d="M1070.40 969.1 L1114.53 933.3 L1158.67 943.0 L1202.80 934.7 L1246.93 891.1 L1291.07 898.2 L1335.20 999.2" fill="none" stroke="#9068f8" stroke-width="2.8" stroke-linejoin="round"/><path d="M1070.3999999999999 1052 L1158.67 1052 C1180.73 1051 1185.15 1044 1202.80 1043.8 C1220.45 1044 1233.69 1051.5 1246.93 1051.5 C1264.59 1051 1277.83 1047 1291.07 1046.2 C1308.72 1040 1321.96 950.4 1335.20 920.4" fill="none" stroke="#c4c9d1" stroke-width="2.7" stroke-dasharray="3 3.2"/></svg>
<div class="t" id="l60_1066.8" style="left:1342.24px;top:841.06px;font-size:12.8px;font-weight:normal;color:#a3acb9;letter-spacing:-0.435px;font-family:'Liberation Sans',sans-serif">USD 60K</div>
<div class="t" id="l40_1066.8" style="left:1342.24px;top:909.16px;font-size:12.8px;font-weight:normal;color:#a3acb9;letter-spacing:-0.435px;font-family:'Liberation Sans',sans-serif">USD 40K</div>
<div class="t" id="l20_1066.8" style="left:1342.24px;top:978.06px;font-size:12.8px;font-weight:normal;color:#a3acb9;letter-spacing:-0.435px;font-family:'Liberation Sans',sans-serif">USD 20K</div>
<div class="t" id="l0_1066.8" style="left:1342.24px;top:1046.86px;font-size:12.8px;font-weight:normal;color:#a3acb9;letter-spacing:-0.281px;font-family:'Liberation Sans',sans-serif">USD 0</div>
<div class="t" id="d8_1066.8" style="left:1070.08px;top:1061.72px;font-size:12.5px;font-weight:normal;color:#687385;letter-spacing:0.169px;font-family:'Liberation Sans',sans-serif">8 Aug</div>
<div class="t" id="d14_1066.8" style="right:126.16px;top:1061.72px;font-size:12.5px;font-weight:normal;color:#687385;letter-spacing:0.108px;font-family:'Liberation Sans',sans-serif">14 Aug</div>
<div class="t" id="vm_1066.8" style="left:1066.88px;top:1092.95px;font-size:14px;font-weight:normal;color:#414552;letter-spacing:0.050px;font-family:'Liberation Sans',sans-serif">View more</div>
</body></html>
